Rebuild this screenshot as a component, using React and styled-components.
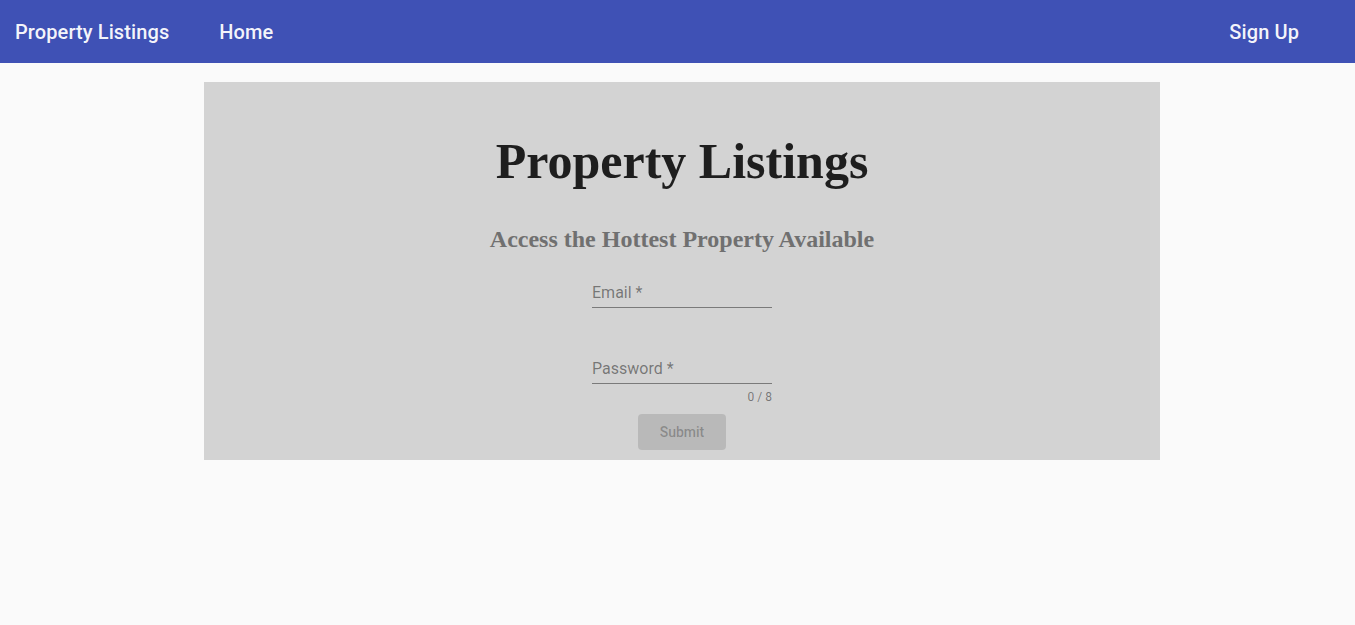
import React from "react";
import styled, { createGlobalStyle } from "styled-components";

const Global = createGlobalStyle`
  html, body { margin: 0; padding: 0; background: #fafafa; }
  body { font-family: Roboto, "Liberation Sans", sans-serif; }
`;

const AppBar = styled.header`
  height: 63px;
  background: #3f51b5;
  display: flex;
  align-items: center;
  padding: 0 56px 0 15px;
  box-sizing: border-box;
`;

const NavItem = styled.a`
  font-family: Roboto, "Liberation Sans", sans-serif;
  font-weight: 500;
  font-size: 20px;
  letter-spacing: 0.1px;
  color: rgba(255, 255, 255, 0.94);
  text-decoration: none;
  margin-right: ${(p) => (p.$gap ? `${p.$gap}px` : "0")};
  margin-left: ${(p) => (p.$push ? "auto" : "0")};
`;

const Content = styled.div`
  padding: 19px 0 0 9px;
`;

const Panel = styled.main`
  width: 956px;
  margin: 0 auto;
  background: #d3d3d3;
  display: flex;
  flex-direction: column;
  align-items: center;
  padding-bottom: 10px;
`;

const Title = styled.h1`
  font-family: "Liberation Serif", "Times New Roman", serif;
  font-weight: 700;
  font-size: 50px;
  line-height: 57px;
  color: #1e1e1e;
  margin: 51px 0 0;
`;

const Subtitle = styled.h2`
  font-family: "Liberation Serif", "Times New Roman", serif;
  font-weight: 700;
  font-size: 24px;
  line-height: 27px;
  color: #707070;
  margin: 36px 0 0;
`;

const Form = styled.form`
  display: flex;
  flex-direction: column;
  align-items: center;
  margin-top: 7px;
`;

const Field = styled.label`
  position: relative;
  display: block;
  width: 180px;
  height: 48px;
  margin-top: ${(p) => p.$mt || 0}px;
`;

const FieldLabel = styled.span`
  position: absolute;
  left: 0;
  top: 23px;
  font-family: Roboto, "Liberation Sans", sans-serif;
  font-size: 16px;
  line-height: 19px;
  color: rgba(0, 0, 0, 0.45);
  pointer-events: none;
`;

const Input = styled.input`
  position: absolute;
  left: 0;
  bottom: 0;
  width: 100%;
  box-sizing: border-box;
  height: 32px;
  padding: 6px 0 7px;
  border: none;
  border-bottom: 1px solid rgba(0, 0, 0, 0.42);
  background: transparent;
  font-family: Roboto, "Liberation Sans", sans-serif;
  font-size: 16px;
  outline: none;
`;

const Helper = styled.p`
  width: 180px;
  margin: 3px 0 0;
  text-align: right;
  font-family: Roboto, "Liberation Sans", sans-serif;
  font-size: 12px;
  line-height: 20px;
  color: rgba(0, 0, 0, 0.45);
`;

const Button = styled.button`
  margin-top: 7px;
  min-width: 88px;
  min-height: 36px;
  padding: 8px 16px;
  border: none;
  border-radius: 4px;
  background: rgba(0, 0, 0, 0.12);
  color: rgba(0, 0, 0, 0.26);
  font-family: Roboto, "Liberation Sans", sans-serif;
  font-weight: 500;
  font-size: 14px;
  line-height: 20px;
  cursor: default;
`;

export default function App() {
  return (
    <>
      <Global />
      <AppBar>
        <NavItem href="#" $gap={50}>Property Listings</NavItem>
        <NavItem href="#">Home</NavItem>
        <NavItem href="#" $push>Sign Up</NavItem>
      </AppBar>
      <Content>
        <Panel>
          <Title>Property Listings</Title>
          <Subtitle>Access the Hottest Property Available</Subtitle>
          <Form onSubmit={(e) => e.preventDefault()}>
            <Field>
              <FieldLabel>Email *</FieldLabel>
              <Input type="email" />
            </Field>
            <Field $mt={28}>
              <FieldLabel>Password *</FieldLabel>
              <Input type="password" />
            </Field>
            <Helper>0 / 8</Helper>
            <Button type="submit" disabled>Submit</Button>
          </Form>
        </Panel>
      </Content>
    </>
  );
}
